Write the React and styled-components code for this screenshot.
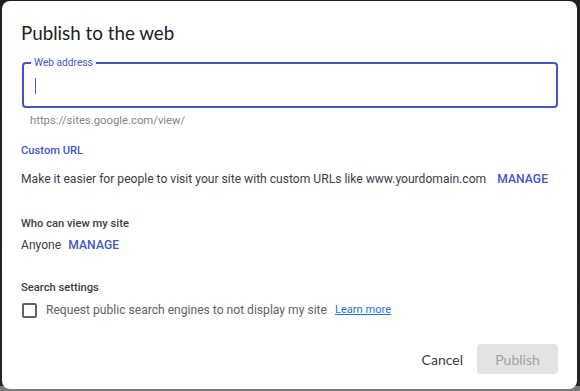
import React from "react";
import styled, { createGlobalStyle } from "styled-components";

const GlobalStyle = createGlobalStyle`
  html, body {
    margin: 0;
    padding: 0;
    height: 100%;
  }
  body {
    background: linear-gradient(to bottom, #202020 0, #262626 386px, #7b7b7b 386px);
    font-family: Roboto, "Liberation Sans", sans-serif;
  }
`;

const Backdrop = styled.div`
  width: 580px;
  height: 391px;
  box-sizing: border-box;
  padding: 1px 3px 2px 2px;
  display: flex;
`;

const Dialog = styled.div`
  flex: 1;
  min-width: 0;
  background: #fff;
  border-radius: 8px;
  padding: 20px 19px 0 19px;
  display: flex;
  flex-direction: column;
`;

const Title = styled.h1`
  margin: 0;
  font-family: Lato, Roboto, sans-serif;
  font-weight: 400;
  font-size: 18.8px;
  color: #202124;
  line-height: 24px;
`;

const Field = styled.div`
  margin: 17px 0 0 1px;
  width: 536px;
  height: 46px;
  box-sizing: border-box;
  border: 2px solid #4456c5;
  border-radius: 4px;
  padding: 0 11px;
  display: flex;
  align-items: center;
  position: relative;
`;

const FloatingLabel = styled.label`
  position: absolute;
  top: -7px;
  left: 7px;
  font-size: 10.2px;
  color: #4456c5;
  background: #fff;
  padding: 0 3px;
  line-height: 12px;
`;

const Caret = styled.span`
  display: block;
  width: 1px;
  height: 16px;
  background: #4456c5;
  margin-top: 1px;
`;

const Helper = styled.div`
  font-size: 11.3px;
  color: #80868b;
  margin: 5px 0 0 9px;
  line-height: 16px;
`;

const SectionLabel = styled.div`
  font-size: 11.2px;
  font-weight: 500;
  color: ${(p) => (p.$accent ? "#4456c5" : "#3c4043")};
  line-height: 16px;
  margin-top: ${(p) => p.$top}px;
`;

const Row = styled.div`
  display: flex;
  align-items: center;
  height: 18px;
  gap: ${(p) => p.$gap}px;
  margin-top: ${(p) => p.$top}px;
`;

const Text = styled.span`
  font-size: 12.1px;
  color: ${(p) => (p.$muted ? "#5f6368" : "#3c4043")};
  line-height: 18px;
  white-space: nowrap;
`;

const ManageLink = styled.a`
  font-size: 12.1px;
  font-weight: 500;
  color: #4456c5;
  letter-spacing: 0.1px;
  line-height: 18px;
  text-decoration: none;
`;

const Checkbox = styled.span`
  width: 15px;
  height: 15px;
  box-sizing: border-box;
  border: 2px solid #5f6368;
  border-radius: 2px;
  margin-left: 1px;
`;

const LearnMore = styled.a`
  font-size: 11.1px;
  color: #1a73e8;
  text-decoration: underline;
  line-height: 16px;
  margin-left: -1px;
`;

const Footer = styled.div`
  margin-top: auto;
  margin-bottom: 15px;
  display: flex;
  justify-content: flex-end;
  align-items: center;
  gap: 14px;
`;

const Button = styled.button`
  font-family: Lato, Roboto, sans-serif;
  font-size: 14px;
  border: none;
  border-radius: 4px;
  height: 30px;
  padding: 0;
  width: ${(p) => (p.$filled ? "81px" : "auto")};
  background: ${(p) => (p.$filled ? "#e3e3e3" : "transparent")};
  color: ${(p) => (p.$filled ? "#a2a2a2" : "#3c4043")};
`;

export default function App() {
  return (
    <>
      <GlobalStyle />
      <Backdrop>
        <Dialog>
          <Title>Publish to the web</Title>
          <Field>
            <FloatingLabel>Web address</FloatingLabel>
            <Caret />
          </Field>
          <Helper>https://sites.google.com/view/</Helper>
          <SectionLabel $accent $top={14}>Custom URL</SectionLabel>
          <Row $top={11} $gap={11}>
            <Text>Make it easier for people to visit your site with custom URLs like www.yourdomain.com</Text>
            <ManageLink>MANAGE</ManageLink>
          </Row>
          <SectionLabel $top={28}>Who can view my site</SectionLabel>
          <Row $top={4} $gap={7}>
            <Text>Anyone</Text>
            <ManageLink>MANAGE</ManageLink>
          </Row>
          <SectionLabel $top={26}>Search settings</SectionLabel>
          <Row $top={5} $gap={9}>
            <Checkbox />
            <Text $muted>Request public search engines to not display my site</Text>
            <LearnMore>Learn more</LearnMore>
          </Row>
          <Footer>
            <Button>Cancel</Button>
            <Button $filled>Publish</Button>
          </Footer>
        </Dialog>
      </Backdrop>
    </>
  );
}
